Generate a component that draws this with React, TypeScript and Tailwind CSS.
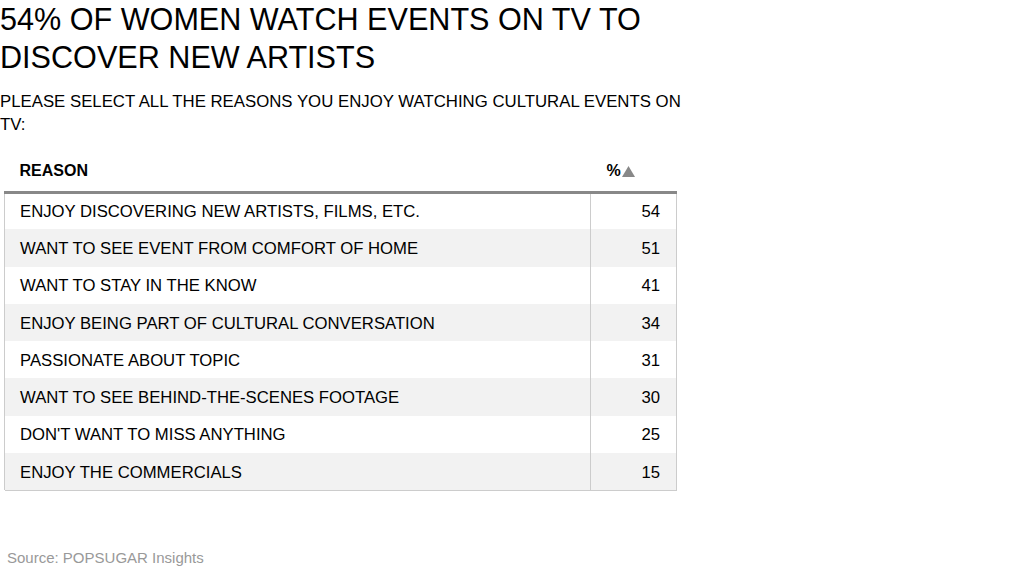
const rows: [string, number][] = [
  ['ENJOY DISCOVERING NEW ARTISTS, FILMS, ETC.', 54],
  ['WANT TO SEE EVENT FROM COMFORT OF HOME', 51],
  ['WANT TO STAY IN THE KNOW', 41],
  ['ENJOY BEING PART OF CULTURAL CONVERSATION', 34],
  ['PASSIONATE ABOUT TOPIC', 31],
  ['WANT TO SEE BEHIND-THE-SCENES FOOTAGE', 30],
  ["DON'T WANT TO MISS ANYTHING", 25],
  ['ENJOY THE COMMERCIALS', 15],
];

export default function App() {
  return (
    <div className="w-[1024px] h-[585px] bg-white text-black font-['Liberation_Sans',Arial,sans-serif] relative">
      <div className="w-[690px]">
        <h1 className="text-[30.6px] leading-[38px]">54% OF WOMEN WATCH EVENTS ON TV TO DISCOVER NEW ARTISTS</h1>
        <p className="mt-[14px] text-[16.8px] leading-[23px]">PLEASE SELECT ALL THE REASONS YOU ENJOY WATCHING CULTURAL EVENTS ON TV:</p>
        <table className="mt-[18px] ml-[4px] w-[673px] border-collapse text-[16.7px]">
          <thead>
            <tr className="h-[38px]">
              <th className="text-left font-bold text-[16px] pl-[15px] pb-[2px]">REASON</th>
              <th className="text-left font-bold text-[16px] pl-[16px] pb-[2px] w-[86px]">
                <span className="inline-flex items-center">
                  %
                  <svg width="13" height="11" viewBox="0 0 13 11" className="ml-[1px]">
                    <polygon points="6.5,0 13,11 0,11" fill="#888" />
                  </svg>
                </span>
              </th>
            </tr>
          </thead>
          <tbody className="border-t-[3px] border-[#888]">
            {rows.map(([label, pct], i) => (
              <tr key={label} className={i % 2 ? 'bg-[#f2f2f2] h-[37.3px]' : 'bg-white h-[37.3px]'}>
                <td className="pl-[15px] pt-[1px] border-l border-[#ccc]">{label}</td>
                <td className="text-right pr-[16px] pt-[1px] border-l border-r border-[#ccc]">{pct}</td>
              </tr>
            ))}
            <tr className="h-0">
              <td colSpan={2} className="border-b border-[#ccc] p-0"></td>
            </tr>
          </tbody>
        </table>
      </div>
      <div className="absolute left-[7px] top-[547px] text-[15px] text-[#999]">Source: POPSUGAR Insights</div>
    </div>
  );
}
